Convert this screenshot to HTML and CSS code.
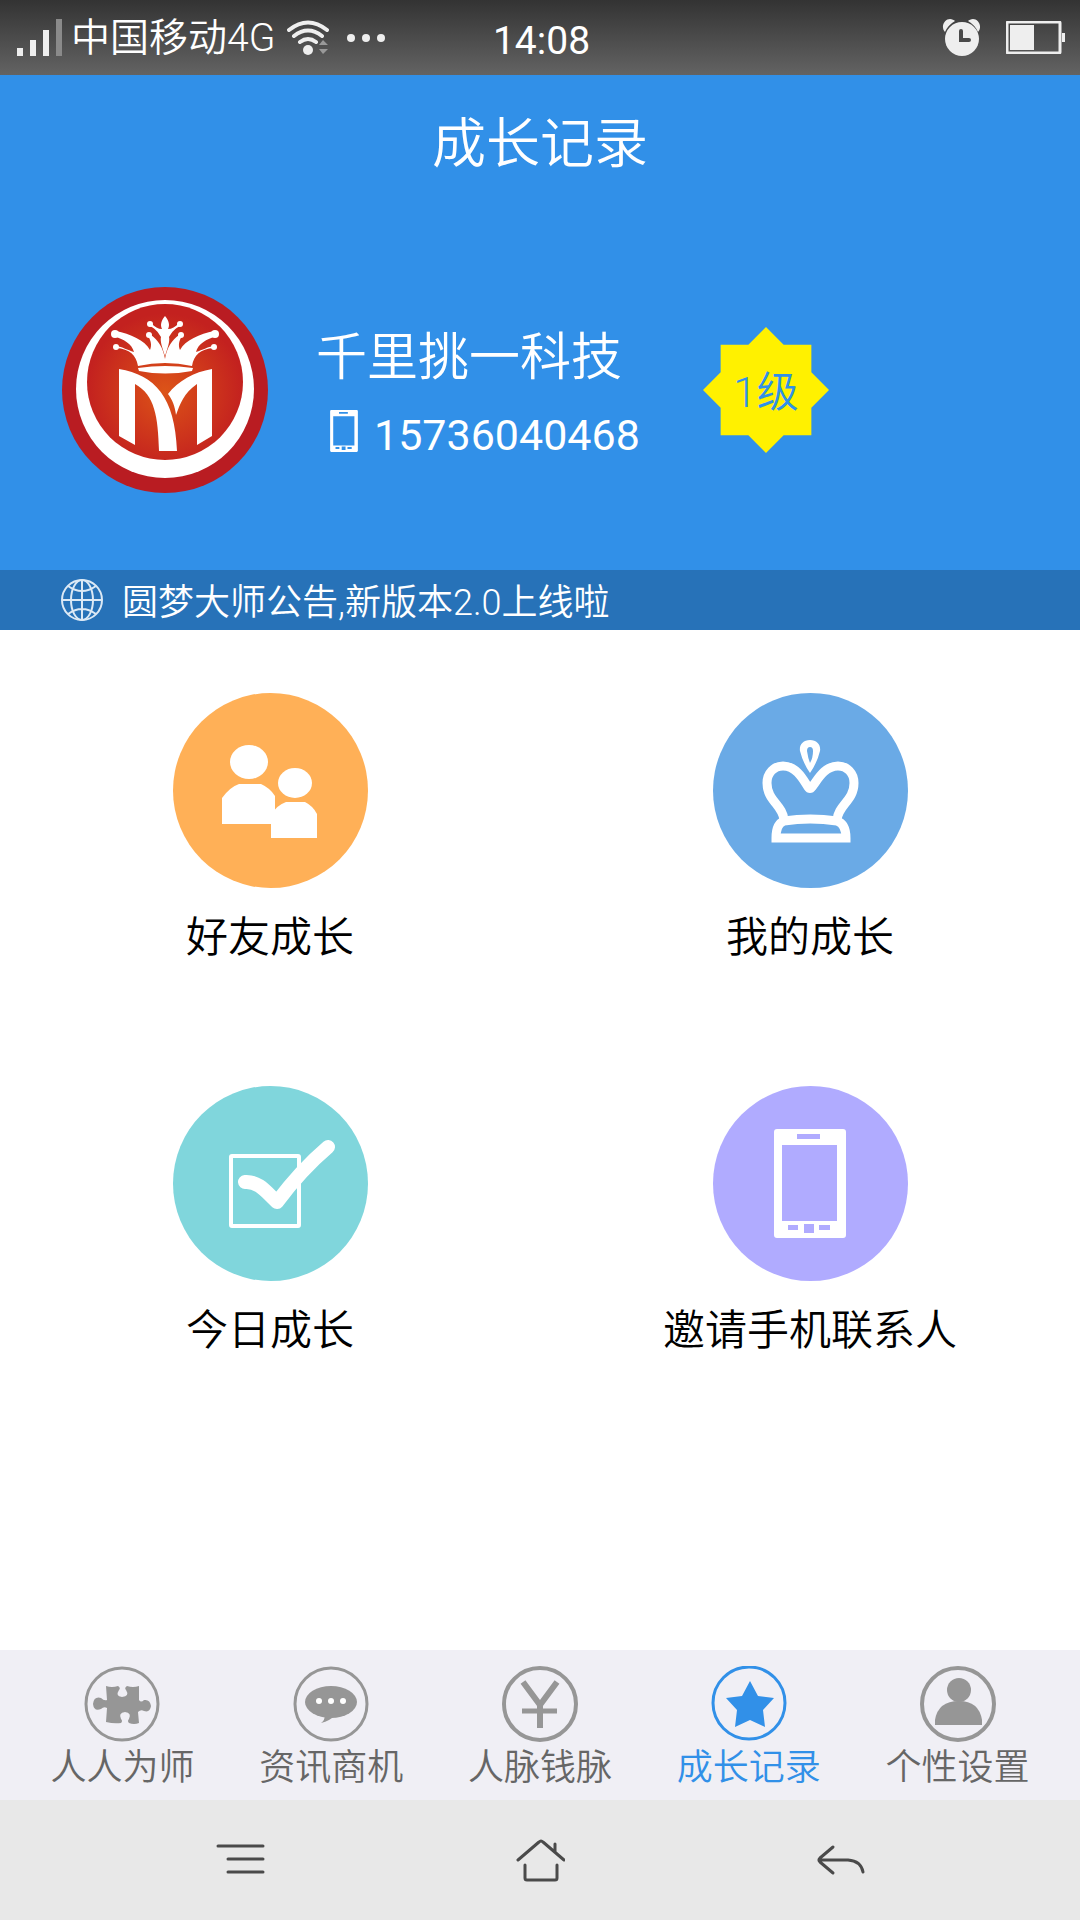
FILE: index.html
```html
<!DOCTYPE html>
<html lang="zh-CN">
<head>
<meta charset="utf-8">
<meta name="viewport" content="width=device-width, initial-scale=1">
<title>成长记录</title>
<link rel="stylesheet" href="styles.css">
</head>
<body>
<svg class="defs" aria-hidden="true">
  <symbol id="phone" viewBox="0 0 72 109">
    <path fill="currentColor" fill-rule="evenodd" d="M3 0H69Q72 0 72 3V106Q72 109 69 109H3Q0 109 0 106V3Q0 0 3 0ZM8 16V92H63V16ZM23 5V10H46V5ZM14 96V101H24V96ZM30 95V104H40V95ZM45 96V101H56V96Z"/>
  </symbol>
</svg>

<div class="status">
  <div class="status-side">
    <svg class="signal" viewBox="0 0 46 38" aria-hidden="true">
      <path fill="#eee" d="M0 29h6v8H0zM13 21h6v16h-6zM26 11h6v26h-6z"/>
      <path fill="#8a8a8a" d="M39 0h6v37h-6z"/>
    </svg>
    <span class="carrier">中国移动4G</span>
    <svg class="wifi" viewBox="0 0 42 36" aria-hidden="true">
      <g fill="none" stroke="#eee" stroke-width="4" stroke-linecap="round">
        <path d="M2 10Q21 -5 40 10M7 16Q21 5 35 16M13 22Q21 16 29 22"/>
      </g>
      <circle cx="21" cy="30" r="5" fill="#eee"/>
      <path fill="#999" d="M32 25l4-5 5 5zM32 29h9l-5 5z"/>
    </svg>
    <svg class="dots" viewBox="0 0 38 8" aria-hidden="true">
      <g fill="#eee"><circle cx="4" cy="4" r="4"/><circle cx="19" cy="4" r="4"/><circle cx="34" cy="4" r="4"/></g>
    </svg>
  </div>
  <time class="clock">14:08</time>
  <div class="status-side status-right">
    <svg class="alarm" viewBox="0 0 40 37" aria-hidden="true">
      <path fill="#eee" d="M3 13C-2 7 3 0 8 0C10 0 12 1 13 2Q6 6 3 13ZM36 13C41 7 36 0 31 0C29 0 27 1 26 2Q33 6 36 13Z"/>
      <circle cx="20" cy="20" r="17" fill="#eee"/>
      <path d="M19 12V21H27" fill="none" stroke="#4a4a4a" stroke-width="4" stroke-linecap="round"/>
    </svg>
    <svg class="battery" viewBox="0 0 60 33" aria-hidden="true">
      <rect x="1" y="1" width="53" height="31" rx="1" fill="none" stroke="#eee" stroke-width="3"/>
      <path fill="#eee" d="M4 4h24v25H4zM56 12h3v9h-3z"/>
    </svg>
  </div>
</div>

<header class="hero">
  <h1 class="title">成长记录</h1>
  <div class="profile">
    <svg class="avatar" viewBox="0 0 206 206" role="img" aria-label="头像">
      <defs>
        <radialGradient id="glow" cx="0.5" cy="0.56" r="0.5">
          <stop offset="0" stop-color="#dc5418"/>
          <stop offset="0.5" stop-color="#d03a1b"/>
          <stop offset="1" stop-color="#c3211f"/>
        </radialGradient>
      </defs>
      <circle cx="103" cy="103" r="103" fill="#b91c22"/>
      <circle cx="103" cy="102" r="89" fill="#fff"/>
      <circle cx="103" cy="95" r="78" fill="url(#glow)"/>
      <g fill="#fff">
        <path d="M76 79C74 68 68 62 54 61L54 59C61 60 65 63 72 65C70 57 62 52 51 49L54 44C68 47 83 53 88 63C90 58 89 54 86 49L89 48C96 53 101 60 103 72C105 60 110 53 117 48L120 49C117 54 116 58 118 63C123 53 138 47 152 44L155 49C144 52 136 57 134 65C141 63 145 60 152 59L152 61C138 62 132 68 130 79Q103 73 76 79Z"/>
        <path d="M103 29C107 34 108 38 106 42C110 42 113 40 117 36L119 39C113 41 110 45 107 50C108 54 106 60 103 69C100 60 98 54 99 50C96 45 93 41 87 39L89 36C93 40 96 42 100 42C98 38 99 34 103 29Z"/>
        <circle cx="53" cy="47" r="4"/><circle cx="153" cy="47" r="4"/>
        <circle cx="54" cy="60" r="3"/><circle cx="152" cy="60" r="3"/>
        <circle cx="87" cy="48" r="3"/><circle cx="119" cy="48" r="3"/>
        <circle cx="88" cy="37" r="3"/><circle cx="118" cy="37" r="3"/>
        <path d="M76 81Q103 77 131 81L130 84Q103 89 77 84Z"/>
        <path d="M57 82C93 88 113 110 115 164H97C96 130 93 108 73 97V158L57 149Z"/>
        <path d="M150 82V149L135 158V97C122 106 118 117 114 128C113 119 110 112 106 107C116 94 132 85 150 82Z"/>
      </g>
    </svg>
    <div class="who">
      <div class="name">千里挑一科技</div>
      <div class="tel">
        <svg class="tel-icon" aria-hidden="true"><use href="#phone"/></svg>
        <span>15736040468</span>
      </div>
    </div>
    <div class="level">1级</div>
  </div>
</header>

<div class="notice">
  <svg class="globe" viewBox="0 0 43 43" aria-hidden="true">
    <g fill="none" stroke="#dce9f5" stroke-width="2">
      <circle cx="21" cy="21" r="20"/>
      <ellipse cx="21" cy="21" rx="11" ry="20"/>
      <path d="M21 1V41M1 21H41M7 7Q21 17 35 7M7 35Q21 25 35 35"/>
    </g>
  </svg>
  <span>圆梦大师公告,新版本2.0上线啦</span>
</div>

<main class="grid">
  <a class="entry" href="#friends">
    <svg class="disc disc-orange" viewBox="0 0 195 195" aria-hidden="true">
      <g fill="#fff">
        <ellipse cx="76" cy="69" rx="19" ry="17"/>
        <path d="M49 131V105Q57 94 66 91H88Q97 95 102 103V131Z"/>
        <ellipse cx="122" cy="90" rx="17" ry="15"/>
        <path d="M98 145V122Q104 112 113 109H132Q140 113 144 121V145Z"/>
      </g>
    </svg>
    <span>好友成长</span>
  </a>
  <a class="entry" href="#mine">
    <svg class="disc disc-blue" viewBox="0 0 195 195" aria-hidden="true">
      <path fill="#fff" fill-rule="evenodd" d="M97 47C104 47 108 52 107 58Q104 70 97 80Q90 70 87 58C86 52 90 47 97 47ZM97 54Q94 54 94 58Q95 65 97 70Q100 65 100 58Q100 54 97 54Z"/>
      <g fill="none" stroke="#fff" stroke-width="9">
        <path d="M71 127C70 112 54 108 54 90C54 80 61 73 70 73C84 73 91 88 95 94Q97 97 99 94C104 88 111 73 125 73C134 73 141 80 141 90C141 108 125 112 124 127"/>
        <path d="M63 145H133C133 136 130 130 124 128Q97 124 71 128C65 130 63 136 63 145Z"/>
      </g>
    </svg>
    <span>我的成长</span>
  </a>
  <a class="entry" href="#today">
    <svg class="disc disc-teal" viewBox="0 0 195 195" aria-hidden="true">
      <g fill="none" stroke="#fff" stroke-linecap="round" stroke-linejoin="round">
        <rect x="58" y="70" width="68" height="70" rx="1" stroke-width="4"/>
        <path stroke-width="14" d="M72 96C86 95 94 107 104 116Q128 84 155 61"/>
      </g>
    </svg>
    <span>今日成长</span>
  </a>
  <a class="entry" href="#invite">
    <svg class="disc disc-violet" viewBox="0 0 195 195" aria-hidden="true"><use href="#phone" x="61" y="43" width="72" height="109"/></svg>
    <span>邀请手机联系人</span>
  </a>
</main>

<nav class="tabs">
  <a class="tab" href="#teachers">
    <svg viewBox="0 0 76 76" aria-hidden="true">
      <circle cx="38" cy="38" r="36" fill="none" stroke="currentColor" stroke-width="3"/>
      <path fill="currentColor" d="M22 20Q28 22 34 20Q37 22 35 24Q31 30 38 31Q46 30 42 24Q40 22 43 20Q49 22 55 20V34Q57 37 60 34Q66 33 67 40Q66 47 60 45Q57 43 54 46L55 57Q50 59 45 57Q43 55 45 53Q48 47 41 46Q34 47 37 53Q39 55 37 57Q30 58 22 56L23 42Q20 40 17 43Q10 46 9 38Q10 30 17 32Q20 35 23 34Z"/>
    </svg>
    <span>人人为师</span>
  </a>
  <a class="tab" href="#news">
    <svg viewBox="0 0 76 76" aria-hidden="true">
      <circle cx="38" cy="38" r="36" fill="none" stroke="currentColor" stroke-width="3"/>
      <ellipse cx="38" cy="36" rx="26" ry="16" fill="currentColor"/>
      <path fill="currentColor" d="M32 49Q32 54 28 57Q37 55 42 49Z"/>
      <g fill="#fff"><circle cx="26" cy="35" r="3"/><circle cx="38" cy="35" r="3"/><circle cx="50" cy="35" r="3"/></g>
    </svg>
    <span>资讯商机</span>
  </a>
  <a class="tab" href="#network">
    <svg viewBox="0 0 76 76" aria-hidden="true">
      <circle cx="38" cy="38" r="36" fill="none" stroke="currentColor" stroke-width="4"/>
      <path fill="none" stroke="currentColor" stroke-width="6" d="M21 16L38 39L55 16M38 37V62"/>
      <path stroke="currentColor" stroke-width="5" d="M20 45H55"/>
    </svg>
    <span>人脉钱脉</span>
  </a>
  <a class="tab tab-active" href="#growth" aria-current="page">
    <svg viewBox="0 0 76 76" aria-hidden="true">
      <circle cx="38" cy="37" r="36" fill="none" stroke="currentColor" stroke-width="3"/>
      <path fill="currentColor" d="M39 15L47 30L63 32L52 44L54 61L39 54L24 61L26 44L15 32L31 30Z"/>
    </svg>
    <span>成长记录</span>
  </a>
  <a class="tab" href="#settings">
    <svg viewBox="0 0 76 76" aria-hidden="true">
      <circle cx="38" cy="38" r="36" fill="none" stroke="currentColor" stroke-width="4"/>
      <circle cx="39" cy="24" r="12" fill="currentColor"/>
      <path fill="currentColor" d="M15 59V54Q18 35 39 35Q59 35 62 54V59Z"/>
    </svg>
    <span>个性设置</span>
  </a>
</nav>

<div class="keys">
  <button class="key" type="button" aria-label="菜单">
    <svg viewBox="0 0 50 44" aria-hidden="true"><path d="M3 8H48M13 21H48M13 34H48"/></svg>
  </button>
  <button class="key" type="button" aria-label="主页">
    <svg viewBox="0 0 50 44" aria-hidden="true"><path d="M3 22L24 4Q26 2 28 4L49 22M40 6V14M10 27V40Q10 42 12 42H40Q42 42 42 40V27"/></svg>
  </button>
  <button class="key" type="button" aria-label="返回">
    <svg viewBox="0 0 50 44" aria-hidden="true"><path d="M18 9L5 20Q3 22 5 24L18 35M5 22H33Q46 23 48 34"/></svg>
  </button>
</div>
</body>
</html>
```
FILE: styles.css
```css
* {
  box-sizing: border-box;
}

body {
  display: flex;
  flex-direction: column;
  min-height: 100vh;
  margin: 0;
  background: #fff;
  color: #000;
  font-family: Roboto, "Noto Sans CJK SC", sans-serif;
  font-weight: 350;
}

a {
  color: inherit;
  text-decoration: none;
}

svg {
  display: block;
  flex: none;
}

.defs {
  position: absolute;
  width: 0;
  height: 0;
}

/* System status bar */
.status {
  display: grid;
  grid-template-columns: 1fr auto 1fr;
  align-items: center;
  height: 75px;
  padding: 0 14px 0 17px;
  background: linear-gradient(#333, #636363);
  color: #fff;
  font-size: 39px;
  line-height: 60px;
}

.status-side {
  display: flex;
  align-items: center;
}

.status-right {
  justify-content: flex-end;
  gap: 24px;
}

.signal {
  width: 46px;
  height: 38px;
}

.carrier {
  margin: 0 12px 0 8px;
}

.wifi {
  width: 42px;
  height: 36px;
  margin-right: 18px;
}

.dots {
  width: 38px;
  height: 8px;
}

.clock {
  padding-top: 6px;
  font-weight: 400;
}

.alarm {
  width: 40px;
  height: 37px;
}

.battery {
  width: 60px;
  height: 33px;
}

/* Title and profile */
.hero {
  padding: 30px 62px 77px;
  background: #3190e8;
  color: #fff;
}

.title {
  margin: 0;
  font-size: 54px;
  font-weight: 350;
  line-height: 80px;
  text-align: center;
}

.profile {
  display: flex;
  align-items: center;
  margin-top: 102px;
}

.avatar {
  width: 206px;
  height: 206px;
}

.who {
  width: 387px;
  padding: 12px 0 0 48px;
}

.name {
  font-size: 51px;
  line-height: 70px;
}

.tel {
  display: flex;
  align-items: center;
  gap: 16px;
  height: 76px;
  padding-left: 14px;
  font-size: 43px;
  font-weight: 400;
  line-height: 60px;
}

.tel span {
  padding-top: 8px;
}

.tel-icon {
  width: 28px;
  height: 42px;
}

.level {
  width: 126px;
  margin-left: 48px;
  padding-top: 6px;
  background: #fff100;
  clip-path: polygon(50% 0, 64% 14%, 86% 14%, 86% 36%, 100% 50%, 86% 64%, 86% 86%, 64% 86%, 50% 100%, 36% 86%, 14% 86%, 14% 64%, 0 50%, 14% 36%, 14% 14%, 36% 14%);
  color: #3190e8;
  font-size: 42px;
  line-height: 120px;
  text-align: center;
}

/* Announcement strip */
.notice {
  display: flex;
  align-items: center;
  gap: 18px;
  padding: 0 61px;
  background: #2772b8;
  color: #fff;
  font-size: 36px;
  line-height: 54px;
}

.notice span {
  padding-top: 6px;
}

.globe {
  width: 43px;
  height: 43px;
}

/* Entry grid */
.grid {
  display: grid;
  flex: 1;
  grid-template-columns: 1fr 1fr;
  align-content: start;
  gap: 118px 0;
  padding: 63px 0;
}

.entry {
  display: flex;
  flex-direction: column;
  align-items: center;
  gap: 20px;
  font-size: 42px;
  line-height: 60px;
}

.disc {
  width: 195px;
  height: 195px;
  border-radius: 50%;
  color: #fff;
}

.disc-orange {
  background: #ffb057;
}

.disc-blue {
  background: #6aaae6;
}

.disc-teal {
  background: #80d6dc;
}

.disc-violet {
  background: #b0abff;
}

/* Tab bar */
.tabs {
  display: flex;
  padding: 16px 18px 6px;
  background: #f0eff5;
}

.tab {
  display: flex;
  flex: 1;
  flex-direction: column;
  align-items: center;
  color: #969696;
  font-size: 36px;
  line-height: 52px;
}

.tab svg {
  width: 76px;
  height: 76px;
}

.tab span {
  color: #666;
}

.tab-active,
.tab-active span {
  color: #3190e8;
}

/* System keys */
.keys {
  display: flex;
  justify-content: center;
  height: 120px;
  background: #e8e8e8;
}

.key {
  display: flex;
  flex: 0 1 300px;
  align-items: center;
  justify-content: center;
  padding: 0;
  border: 0;
  background: none;
}

.key svg {
  width: 50px;
  height: 44px;
  fill: none;
  stroke: #4a4a4a;
  stroke-width: 3px;
  stroke-linecap: round;
  stroke-linejoin: round;
}
```
